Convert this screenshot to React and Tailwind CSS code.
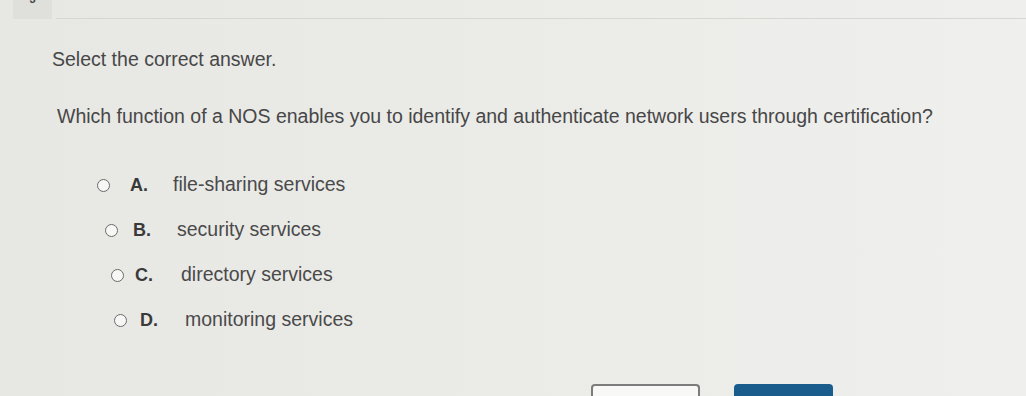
import React from "react";

const options = [
  { letter: "A.", text: "file-sharing services", pl: "pl-[97px]", lm: "ml-[20px]", lw: "w-[43px]" },
  { letter: "B.", text: "security services", pl: "pl-[105px]", lm: "ml-[15px]", lw: "w-[44px]" },
  { letter: "C.", text: "directory services", pl: "pl-[111px]", lm: "ml-[11px]", lw: "w-[46px]" },
  { letter: "D.", text: "monitoring services", pl: "pl-[114px]", lm: "ml-[13px]", lw: "w-[45px]" },
];

export default function App() {
  return (
    <div
      className="w-[1026px] h-[396px] overflow-hidden bg-gradient-to-r from-[#e7e7e4] via-[#ebebe8] to-[#efefed] text-[#474747]"
      style={{ fontFamily: '"Liberation Sans", Arial, sans-serif' }}
    >
      <div className="flex items-end h-[19px]">
        <div className="ml-[13px] w-[39px] h-[19px] bg-[#dfdfdb] flex justify-center overflow-hidden">
          <span className="text-[11px] font-bold text-[#444] leading-[11px] h-[5px] overflow-hidden flex items-end">3</span>
        </div>
        <div className="flex-1 ml-[4px] border-b border-[#d6d6d2]" />
      </div>

      <div className="pl-[52px] pt-[29px] text-[19.5px] leading-[22px]">Select the correct answer.</div>
      <div className="pl-[57px] pt-[35px] text-[19.5px] leading-[22px]">
        Which function of a NOS enables you to identify and authenticate network users through certification?
      </div>

      <div className="pt-[47px] flex flex-col gap-[23px]">
        {options.map((o) => (
          <div key={o.letter} className={`flex items-center h-[22px] ${o.pl}`}>
            <span className="w-[13px] h-[13px] rounded-full border-[1.5px] border-[#6a6a6a] bg-[#f7f7f5]" />
            <span className={`${o.lm} ${o.lw} text-[18px] font-bold text-[#3a3a3a]`}>{o.letter}</span>
            <span className="text-[19.5px] text-[#4a4a4a]">{o.text}</span>
          </div>
        ))}
      </div>

      <div className="flex pt-[53px] pl-[591px] gap-[34px]">
        <div className="w-[109px] h-[20px] rounded-t-[4px] border-2 border-b-0 border-[#7c7c7c] bg-[#f8f8f6]" />
        <div className="w-[99px] h-[20px] rounded-t-[4px] bg-[#1a5d8c]" />
      </div>
    </div>
  );
}
